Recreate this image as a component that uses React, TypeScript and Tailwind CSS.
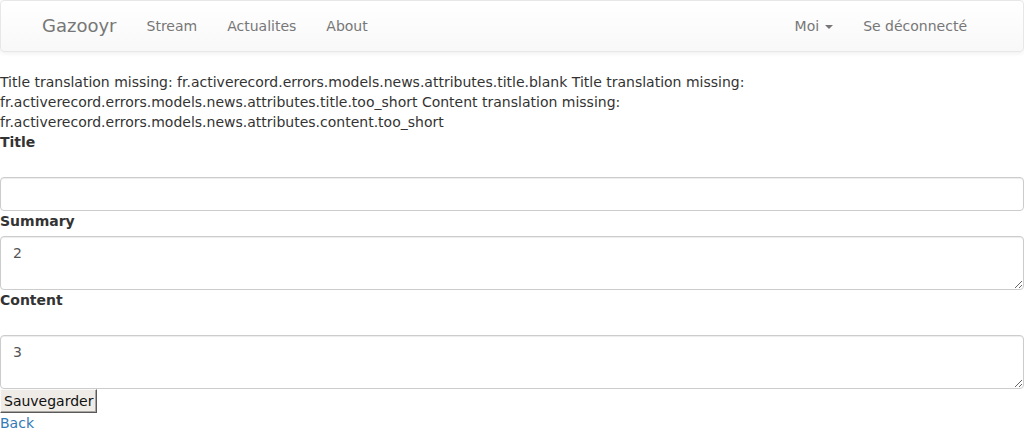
import React from 'react';

const navLinks = ['Stream', 'Actualites', 'About'];

export default function App() {
  return (
    <div className="font-['DejaVu_Sans',sans-serif] text-[14px] leading-[20px] text-[#333] bg-white min-h-[433px]">
      {/* Navbar */}
      <nav className="h-[52px] mb-[20px] border border-[#e7e7e7] rounded-[4px] bg-gradient-to-b from-white to-[#f8f8f8] shadow-[0_1px_5px_rgba(0,0,0,0.075)]">
        <div className="w-[970px] mx-auto px-[15px] flex justify-between">
          <div className="flex">
            <a className="-ml-[15px] px-[15px] py-[15px] h-[50px] text-[18px] leading-[20px] text-[#777]">Gazooyr</a>
            {navLinks.map((l) => (
              <a key={l} className="px-[15px] py-[15px] text-[#777]">
                {l}
              </a>
            ))}
          </div>
          <div className="flex">
            <a className="px-[15px] py-[15px] text-[#777] flex items-center">
              Moi
              <span className="ml-[6px] mt-[1px] w-0 h-0 border-x-[4px] border-x-transparent border-t-[4px] border-t-[#777]" />
            </a>
            <a className="px-[15px] py-[15px] text-[#777]">Se déconnecté</a>
          </div>
        </div>
      </nav>

      {/* Errors */}
      <div>
        Title translation missing: fr.activerecord.errors.models.news.attributes.title.blank Title translation missing:
        fr.activerecord.errors.models.news.attributes.title.too_short Content translation missing:
        fr.activerecord.errors.models.news.attributes.content.too_short
      </div>

      <form>
        <label className="block font-bold mb-[5px]">Title</label>
        <div className="h-[20px]" />
        <input
          type="text"
          className="block w-full h-[34px] px-[12px] py-[6px] text-[#555] bg-white border border-[#ccc] rounded-[4px] shadow-[inset_0_1px_1px_rgba(0,0,0,0.075)] outline-none"
        />

        <label className="block font-bold mb-[5px]">Summary</label>
        <textarea
          rows={2}
          defaultValue="2"
          className="block w-full h-[54px] px-[12px] py-[6px] text-[#555] bg-white border border-[#ccc] rounded-[4px] shadow-[inset_0_1px_1px_rgba(0,0,0,0.075)] outline-none"
        />

        <label className="block font-bold mb-[5px]">Content</label>
        <div className="h-[20px]" />
        <textarea
          rows={2}
          defaultValue="3"
          className="block w-full h-[54px] px-[12px] py-[6px] text-[#555] bg-white border border-[#ccc] rounded-[4px] shadow-[inset_0_1px_1px_rgba(0,0,0,0.075)] outline-none"
        />

        <button
          type="button"
          className="block h-[24px] px-[3px] leading-[20px] text-[#111] bg-[#efebe7] border border-t-[#fafafa] border-l-[#fafafa] border-r-[#5a5a5a] border-b-[#5a5a5a] shadow-[inset_-1px_-1px_0_#a8a5a2]"
        >
          Sauvegarder
        </button>
      </form>
      <a className="text-[#337ab7]">Back</a>
    </div>
  );
}
